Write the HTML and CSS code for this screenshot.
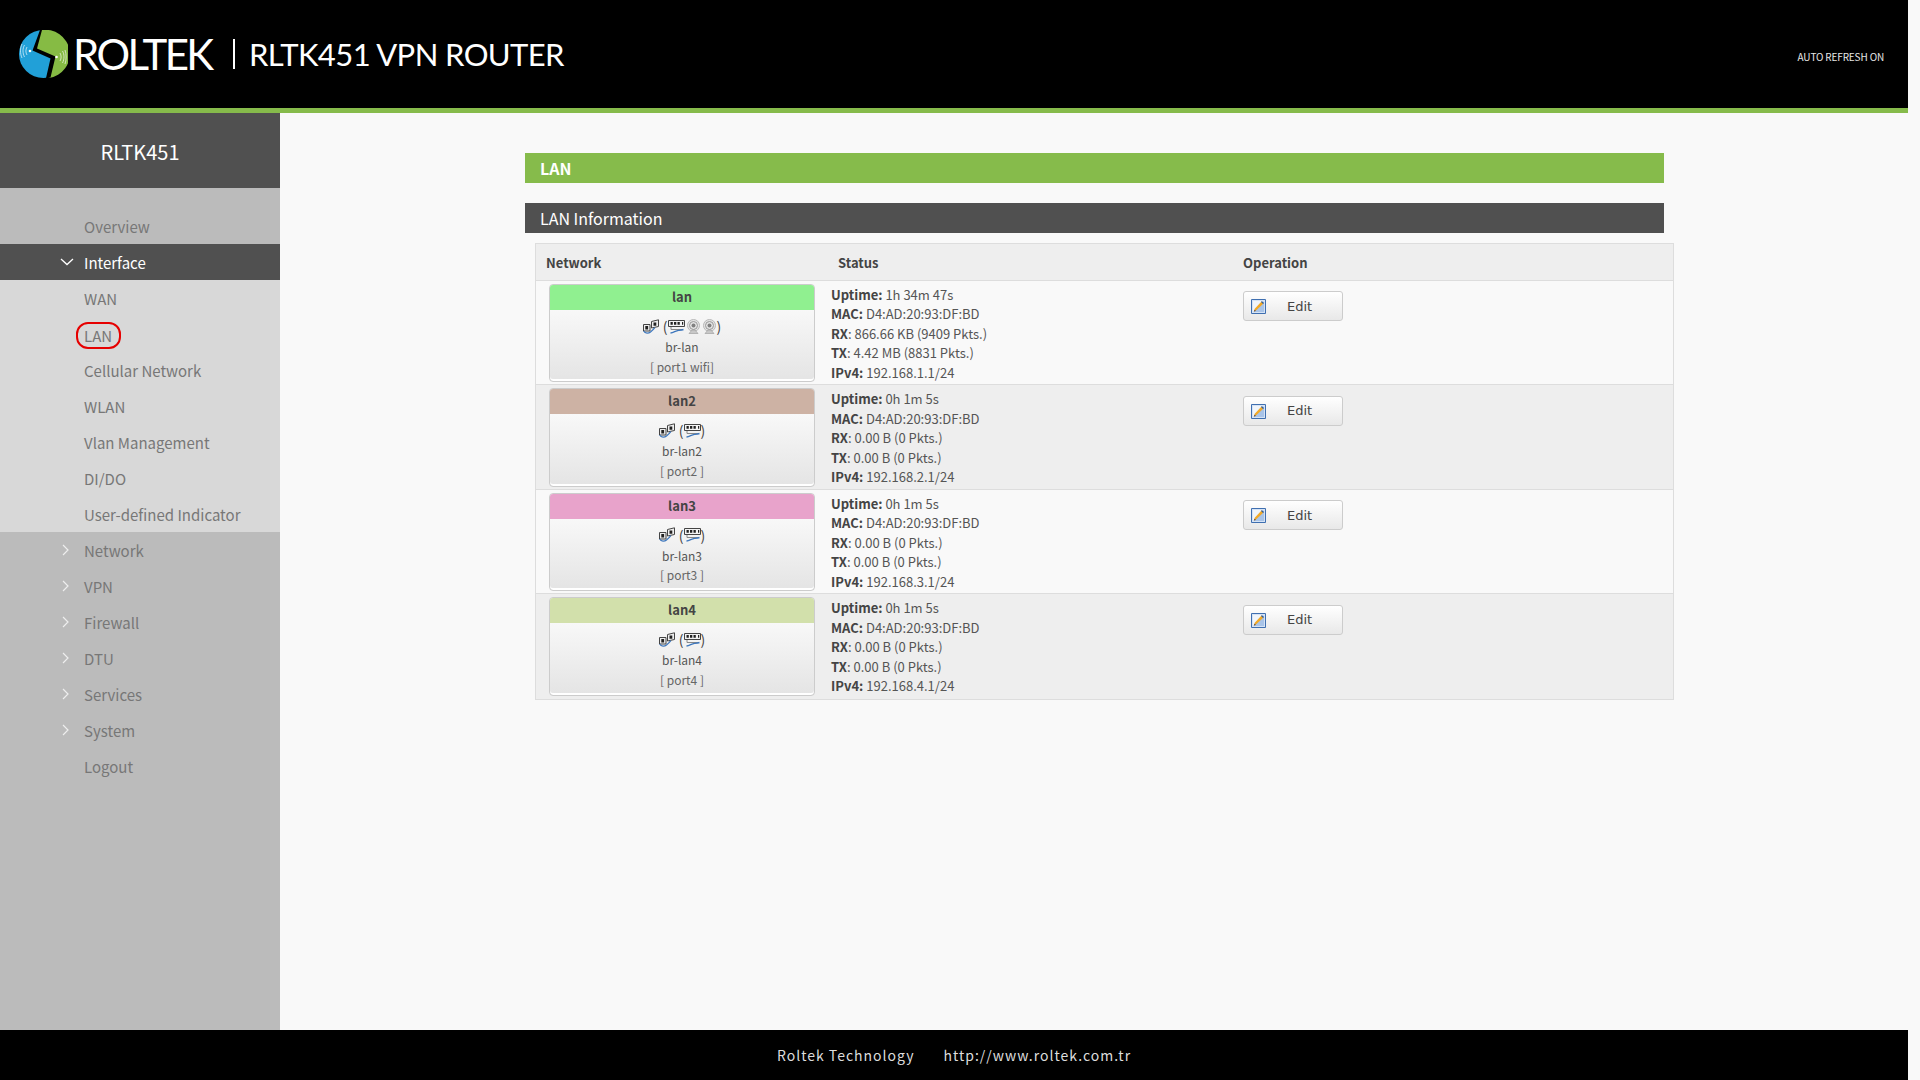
FILE: index.html
```html
<!DOCTYPE html>
<html lang="en">
<head>
<meta charset="utf-8">
<title>RLTK451 VPN ROUTER</title>
<link rel="stylesheet" href="styles.css">
</head>
<body>
<svg class="defs" width="0" height="0" aria-hidden="true">
  <symbol id="i-bridge" viewBox="0 0 16 15">
    <path d="M.5 5.500h6.500v6.500H.5z" fill="#eee" stroke="#444" stroke-width="1"/>
    <path d="M8.500 2.500L15.500.8v6.700L8.500 9z" fill="#eee" stroke="#444" stroke-width="1"/>
    <path d="M2.300 7h2.800v3.500H2.300zM10.500 3.500h2.800v3.200h-2.800z" fill="#222"/>
    <path d="M.7 12c1.500 3 5 2.500 6.800 1 1.800-1.500 3-2.500 4.300-4.300" fill="none" stroke="#3f78bd" stroke-width="1.300"/>
  </symbol>
  <symbol id="i-port" viewBox="0 0 17 15">
    <path d="M.5 1.500h16v6H.5z" fill="#f3f3f3" stroke="#444" stroke-width="1"/>
    <path d="M2.500 3h2.300v2.800H2.500zM6 3h2.300v2.800H6zM9.500 3h2.300v2.800H9.500zM14 3h1.200v2.800H14z" fill="#222"/>
    <path d="M3 8v2.500h11" fill="none" stroke="#888" stroke-width="1"/>
    <path d="M2.500 14c3-.2 5-2.200 8-2.600 2-.2 3.500-.3 5-.9" fill="none" stroke="#3f78bd" stroke-width="1.400"/>
  </symbol>
  <symbol id="i-wifi" viewBox="0 0 15 15">
    <circle cx="7.500" cy="6.500" r="6" fill="#e4e4e4" stroke="#b8b8b8" stroke-width="1"/>
    <circle cx="7.500" cy="6.500" r="4" fill="none" stroke="#999" stroke-width="1"/>
    <circle cx="7.500" cy="6.500" r="2" fill="#808080"/>
    <path d="M3 14.500l3-3.500h3l3 3.500z" fill="#c8c8c8" stroke="#999" stroke-width=".6"/>
  </symbol>
  <symbol id="i-edit" viewBox="0 0 15 15">
    <path d="M.5.500h14v14H.5z" fill="#d5e3f5" stroke="#3f6fb0" stroke-width="1"/>
    <path d="M2 2h11v11H2z" fill="#f0f5fb"/>
    <path d="M2 13L13 2v11z" fill="#a9c4e8"/>
    <path d="M3 12.500l1-3 6.500-7 2 2-7 6.500z" fill="#f2a926"/>
    <path d="M3 12.500l.6-1.900 1.300 1.300z" fill="#654321"/>
    <path d="M10.500 2.500l2 2" stroke="#2d5d9f" stroke-width="1.200"/>
  </symbol>
</svg>
<div class="page">
  <header class="topbar">
    <div class="brand">
      <svg class="logo" viewBox="0 0 49 48" width="49" height="48" role="img" aria-label="Roltek logo">
        <ellipse cx="24.500" cy="24" rx="24.500" ry="24" fill="#21a0d8"/>
        <path d="M22 0L17 19l19 8-6 21A24.500 24 0 0 0 22 0z" fill="#86bb44"/>
        <path d="M21 0l-7.500 20.500 18 8L27 48.200l4.500-.6 5-21-18.500-8L23 0z" fill="#000"/>
        <circle cx="11" cy="21" r="1.300" fill="#fff"/>
        <circle cx="37.500" cy="27" r="1.300" fill="#fff"/>
        <path d="M8 17c-1.500 2.500-1.500 5.500 0 8M5.500 15c-2 3.500-2 8 0 12M3 14c-2 4-2 9.500 0 14M41 23c1.500 2.500 1.500 5.500 0 8M43.500 21c2 3.500 2 8 0 12M46 20c1.500 4 1.500 10 0 14" fill="none" stroke="#fff" stroke-width=".8" opacity=".8"/>
      </svg>
      <span class="brand-name">ROLTEK</span>
      <span class="brand-sep"></span>
      <span class="brand-model">RLTK451 VPN ROUTER</span>
    </div>
    <div class="refresh">AUTO REFRESH ON</div>
  </header>
  <div class="main">
    <aside class="sidebar">
      <div class="side-title">RLTK451</div>
      <nav class="menu">
        <a class="item">Overview</a>
        <a class="item active"><svg class="chev" viewBox="0 0 14 8" width="14" height="8"><path d="M1 1l6 5.500L13 1" fill="none" stroke="#fff" stroke-width="1.300"/></svg>Interface</a>
        <div class="sub">
          <a class="item">WAN</a>
          <a class="item"><span class="current">LAN</span></a>
          <a class="item">Cellular Network</a>
          <a class="item">WLAN</a>
          <a class="item">Vlan Management</a>
          <a class="item">DI/DO</a>
          <a class="item">User-defined Indicator</a>
        </div>
        <a class="item"><svg class="chev" viewBox="0 0 14 14" width="14" height="14"><path d="M4 2l5 5-5 5" fill="none" stroke="#eee" stroke-width="1.200"/></svg>Network</a>
        <a class="item"><svg class="chev" viewBox="0 0 14 14" width="14" height="14"><path d="M4 2l5 5-5 5" fill="none" stroke="#eee" stroke-width="1.200"/></svg>VPN</a>
        <a class="item"><svg class="chev" viewBox="0 0 14 14" width="14" height="14"><path d="M4 2l5 5-5 5" fill="none" stroke="#eee" stroke-width="1.200"/></svg>Firewall</a>
        <a class="item"><svg class="chev" viewBox="0 0 14 14" width="14" height="14"><path d="M4 2l5 5-5 5" fill="none" stroke="#eee" stroke-width="1.200"/></svg>DTU</a>
        <a class="item"><svg class="chev" viewBox="0 0 14 14" width="14" height="14"><path d="M4 2l5 5-5 5" fill="none" stroke="#eee" stroke-width="1.200"/></svg>Services</a>
        <a class="item"><svg class="chev" viewBox="0 0 14 14" width="14" height="14"><path d="M4 2l5 5-5 5" fill="none" stroke="#eee" stroke-width="1.200"/></svg>System</a>
        <a class="item">Logout</a>
      </nav>
    </aside>
    <main class="content">
      <h2 class="bar bar-green">LAN</h2>
      <h3 class="bar bar-dark">LAN Information</h3>
      <div class="table">
        <div class="row head">
          <div class="th">Network</div>
          <div class="th">Status</div>
          <div class="th">Operation</div>
        </div>
        <div class="row">
          <div class="cell-net">
            <div class="card">
              <div class="card-name name-lan">lan</div>
              <div class="card-body">
                <div class="icons"><svg class="ic16"><use href="#i-bridge"/></svg> <span class="paren">(</span><svg class="ic17"><use href="#i-port"/></svg><svg class="ic14"><use href="#i-wifi"/></svg><svg class="ic14"><use href="#i-wifi"/></svg><span class="paren">)</span></div>
                <div>br-lan</div>
                <div class="ports">[ port1 wifi]</div>
              </div>
            </div>
          </div>
          <div class="cell-status">
            <div><b>Uptime:</b> 1h 34m 47s</div>
            <div><b>MAC:</b> D4:AD:20:93:DF:BD</div>
            <div><b>RX</b>: 866.66 KB (9409 Pkts.)</div>
            <div><b>TX</b>: 4.42 MB (8831 Pkts.)</div>
            <div><b>IPv4:</b> 192.168.1.1/24</div>
          </div>
          <div class="cell-op"><button class="edit"><svg class="ic-edit"><use href="#i-edit"/></svg>Edit</button></div>
        </div>
        <div class="row alt">
          <div class="cell-net">
            <div class="card">
              <div class="card-name name-lan2">lan2</div>
              <div class="card-body">
                <div class="icons"><svg class="ic16"><use href="#i-bridge"/></svg> <span class="paren">(</span><svg class="ic17"><use href="#i-port"/></svg><span class="paren">)</span></div>
                <div>br-lan2</div>
                <div class="ports">[ port2 ]</div>
              </div>
            </div>
          </div>
          <div class="cell-status">
            <div><b>Uptime:</b> 0h 1m 5s</div>
            <div><b>MAC:</b> D4:AD:20:93:DF:BD</div>
            <div><b>RX</b>: 0.00 B (0 Pkts.)</div>
            <div><b>TX</b>: 0.00 B (0 Pkts.)</div>
            <div><b>IPv4:</b> 192.168.2.1/24</div>
          </div>
          <div class="cell-op"><button class="edit"><svg class="ic-edit"><use href="#i-edit"/></svg>Edit</button></div>
        </div>
        <div class="row">
          <div class="cell-net">
            <div class="card">
              <div class="card-name name-lan3">lan3</div>
              <div class="card-body">
                <div class="icons"><svg class="ic16"><use href="#i-bridge"/></svg> <span class="paren">(</span><svg class="ic17"><use href="#i-port"/></svg><span class="paren">)</span></div>
                <div>br-lan3</div>
                <div class="ports">[ port3 ]</div>
              </div>
            </div>
          </div>
          <div class="cell-status">
            <div><b>Uptime:</b> 0h 1m 5s</div>
            <div><b>MAC:</b> D4:AD:20:93:DF:BD</div>
            <div><b>RX</b>: 0.00 B (0 Pkts.)</div>
            <div><b>TX</b>: 0.00 B (0 Pkts.)</div>
            <div><b>IPv4:</b> 192.168.3.1/24</div>
          </div>
          <div class="cell-op"><button class="edit"><svg class="ic-edit"><use href="#i-edit"/></svg>Edit</button></div>
        </div>
        <div class="row alt">
          <div class="cell-net">
            <div class="card">
              <div class="card-name name-lan4">lan4</div>
              <div class="card-body">
                <div class="icons"><svg class="ic16"><use href="#i-bridge"/></svg> <span class="paren">(</span><svg class="ic17"><use href="#i-port"/></svg><span class="paren">)</span></div>
                <div>br-lan4</div>
                <div class="ports">[ port4 ]</div>
              </div>
            </div>
          </div>
          <div class="cell-status">
            <div><b>Uptime:</b> 0h 1m 5s</div>
            <div><b>MAC:</b> D4:AD:20:93:DF:BD</div>
            <div><b>RX</b>: 0.00 B (0 Pkts.)</div>
            <div><b>TX</b>: 0.00 B (0 Pkts.)</div>
            <div><b>IPv4:</b> 192.168.4.1/24</div>
          </div>
          <div class="cell-op"><button class="edit"><svg class="ic-edit"><use href="#i-edit"/></svg>Edit</button></div>
        </div>
      </div>
    </main>
  </div>
  <footer class="footer">
    <span>Roltek Technology</span>
    <span>http://www.roltek.com.tr</span>
  </footer>
</div>
</body>
</html>
```
FILE: styles.css
```css
html, body {
  margin: 0;
  height: 100%;
  overflow: hidden;
  background: #f9f9f9;
}
body {
  font-family: "Noto Sans CJK SC", "Noto Sans", sans-serif;
  font-size: 13px;
  color: #555;
}
.defs { position: absolute; }
.page {
  width: 1908px;
  height: 1080px;
  display: flex;
  flex-direction: column;
}
.topbar {
  height: 108px;
  flex: none;
  background: #000;
  border-bottom: 5px solid #86bb4b;
  display: flex;
  align-items: center;
  justify-content: space-between;
  padding: 0 24px 0 19px;
}
.brand {
  display: flex;
  align-items: center;
  color: #fff;
  font-family: Lato, "Open Sans", sans-serif;
}
.brand-name {
  margin-left: 5px;
  width: 141px;
  font-size: 42px;
  line-height: 48px;
  letter-spacing: -2.600px;
}
.brand-sep {
  width: 2px;
  height: 30px;
  margin-left: 19px;
  background: #fff;
}
.brand-model {
  margin-left: 14px;
  font-size: 31px;
  line-height: 48px;
  letter-spacing: -.600px;
}
.refresh {
  font-size: 10px;
  letter-spacing: -.150px;
  color: #e6e6e6;
  margin-top: 4px;
}
.main {
  flex: 1;
  min-height: 0;
  display: flex;
}
.sidebar {
  width: 280px;
  flex: none;
  background: #bbb;
}
.side-title {
  height: 75px;
  background: #505050;
  color: #fff;
  font-size: 20px;
  line-height: 77px;
  text-align: center;
}
.menu { padding-top: 20px; }
.item {
  position: relative;
  display: block;
  height: 36px;
  line-height: 37px;
  padding-left: 84px;
  font-size: 15px;
  color: #777;
}
.item.active {
  background: #505050;
  color: #fff;
}
.sub { background: #d8d8d8; }
.chev {
  position: absolute;
  left: 59px;
  top: 11px;
}
.active .chev { top: 14px; left: 60px; }
.current {
  display: inline-block;
  height: 23px;
  line-height: 23px;
  padding: 0 7px 0 6px;
  margin: 6px 0 0 -8px;
  border: 2px solid #e60000;
  border-radius: 12px;
  vertical-align: top;
}
.content {
  flex: 1;
  min-width: 0;
  padding: 40px 244px 0 245px;
}
.bar {
  margin: 0;
  height: 30px;
  line-height: 30px;
  padding-left: 15px;
  color: #fff;
  font-size: 16px;
}
.bar-green { background: #86bb4b; font-weight: 700; }
.bar-dark { background: #505050; font-weight: 400; margin-top: 20px; }
.table {
  margin: 10px -10px 0 10px;
  border: 1px solid #ddd;
}
.row {
  display: grid;
  grid-template-columns: 292px 405px 1fr;
  border-top: 1px solid #ddd;
  background: #f9f9f9;
}
.row.alt { background: #eee; }
.row:last-child { padding-bottom: 1px; }
.row.head {
  border-top: 0;
  height: 36px;
  background: #eee;
}
.th {
  padding-left: 10px;
  line-height: 37px;
  font-weight: 700;
  color: #444;
}
.cell-net { padding: 3px 13px 2px; display: flex; }
.card {
  flex: 1;
  border: 1px solid #ccc;
  border-radius: 4px;
  overflow: hidden;
  box-shadow: inset 0 -2px 0 #fff;
  background: linear-gradient(#fff, #e4e4e4);
  text-align: center;
  font-size: 12px;
  line-height: 19.500px;
  color: #555;
}
.card-name {
  height: 25px;
  line-height: 24px;
  font-size: 13px;
  font-weight: 700;
  color: #444;
}
.name-lan { background: #90f090; }
.name-lan2 { background: #cdb2a4; }
.name-lan3 { background: #e8a3cb; }
.name-lan4 { background: #d2e0ab; }
.card-body { padding-top: 5px; }
.ports { color: #666; }
.icons {
  height: 22px;
  line-height: 22px;
  display: flex;
  align-items: center;
  justify-content: center;
}
.paren { font-size: 14px; color: #444; }
.ic16 { width: 16px; height: 15px; margin-right: 4px; }
.ic17 { width: 17px; height: 15px; }
.ic14 { width: 15px; height: 15px; margin-left: 1px; }
.cell-status {
  padding: 3.700px 3px 2.300px;
  line-height: 19.500px;
  color: #555;
}
.cell-status b { color: #444; }
.cell-op { padding: 10.400px 0 0 10px; }
.edit {
  position: relative;
  display: block;
  width: 100px;
  height: 30px;
  padding: 0 0 0 43px;
  border: 1px solid #ccc;
  border-radius: 3px;
  background: linear-gradient(#fff, #e8e8e8);
  font-family: "DejaVu Sans", sans-serif;
  font-size: 13px;
  color: #444;
  text-align: left;
}
.ic-edit {
  position: absolute;
  left: 7px;
  top: 7px;
  width: 15px;
  height: 15px;
}
.footer {
  height: 50px;
  flex: none;
  background: #000;
  color: #ddd;
  font-size: 14px;
  letter-spacing: 1px;
  display: flex;
  justify-content: center;
  align-items: center;
  gap: 29px;
}
```
